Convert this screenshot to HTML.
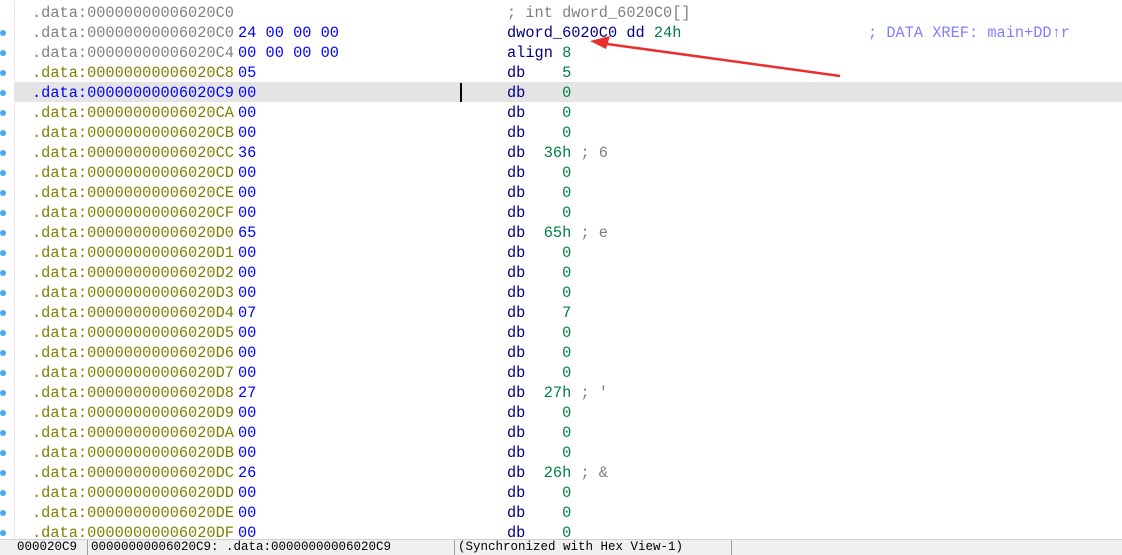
<!DOCTYPE html>
<html><head><style>
body{margin:0;width:1122px;height:554px;background:#fff;overflow:hidden;position:relative;font-family:"Liberation Mono",monospace;}
.r{position:absolute;left:0;width:1122px;height:20px;font-size:15.3px;line-height:20px;white-space:pre;}
.r span{position:absolute;top:0}
.a{left:32px;color:#808000}
.g{color:#808080}
.h{left:238px;color:#0000ff}
.i{left:507px;color:#000080}
.n{color:#008040}
.c{color:#808080}
.x{left:868px;color:#8080ff}
.dot{position:absolute;left:0;width:6px;height:6px;border-radius:3px;background:#4aa8f0}
.selbg{position:absolute;left:14px;width:1108px;height:20px;background:#e4e4e4}
#bar{position:absolute;left:0;top:539px;width:1122px;height:15px;background:#f0f0f0;border-top:1px solid #d0d0d0;font-family:"Liberation Mono",monospace;font-size:12.5px;line-height:15px;white-space:pre}
#bar span{position:absolute;top:0;border-right:1px solid #a0a0a0;padding-left:3px;height:15px}
</style></head><body>
<div style="position:absolute;left:14px;top:0;width:1px;height:539px;background:#e8e8e8"></div>
<div class="selbg" style="top:82px"></div>
<div id="rows"></div>
<div class="r" style="top:3px"><span class="a g">.data:00000000006020C0</span><span class="i c">; int dword_6020C0[]</span></div>
<div class="r" style="top:23px"><span class="a g">.data:00000000006020C0</span><span class="h">24 00 00 00</span><span class="i">dword_6020C0 dd <b class="n" style="font-weight:normal">24h</b></span><span class="x">; DATA XREF: main+DD↑r</span></div>
<div class="r" style="top:43px"><span class="a g">.data:00000000006020C4</span><span class="h">00 00 00 00</span><span class="i">align <b class="n" style="font-weight:normal">8</b></span></div>
<script>
var rows=[["C8","05","    5",""],["C9","00","    0",""],["CA","00","    0",""],["CB","00","    0",""],["CC","36","  36h"," ; 6"],["CD","00","    0",""],["CE","00","    0",""],["CF","00","    0",""],["D0","65","  65h"," ; e"],["D1","00","    0",""],["D2","00","    0",""],["D3","00","    0",""],["D4","07","    7",""],["D5","00","    0",""],["D6","00","    0",""],["D7","00","    0",""],["D8","27","  27h"," ; '"],["D9","00","    0",""],["DA","00","    0",""],["DB","00","    0",""],["DC","26","  26h"," ; &"],["DD","00","    0",""],["DE","00","    0",""],["DF","00","    0",""]];
var h="";
h+='<div class="dot" style="top:30px"></div><div class="dot" style="top:50px"></div>';
rows.forEach(function(r,k){var t=63+20*k;var s=r[0]=="C9";
h+='<div class="r" style="top:'+t+'px">'+
'<span class="a" style="'+(s?'color:#0000ff':'')+'">.data:00000000006020'+r[0]+'</span>'+
'<span class="h">'+r[1]+'</span>'+
'<span class="i">db<b class="n" style="font-weight:normal">'+r[2]+'</b><b class="c" style="font-weight:normal">'+r[3]+'</b></span>'+
(s?'<span style="left:460px;top:0;width:2px;height:19px;background:#000"></span>':'')+
'</div><div class="dot" style="top:'+(t+7)+'px"></div>';});
document.getElementById("rows").innerHTML=h;
</script>
<svg style="position:absolute;left:0;top:0" width="1122" height="554">
<line x1="840" y1="76" x2="600" y2="43" stroke="#e83030" stroke-width="2.5"/>
<polygon points="590,41 610,36 606,49" fill="#e83030"/>
</svg>
<div id="bar"><span style="left:14px;width:70px">000020C9</span><span style="left:88px;width:363px">00000000006020C9: .data:00000000006020C9</span><span style="left:455px;width:273px">(Synchronized with Hex View-1)</span></div>
</body></html>
